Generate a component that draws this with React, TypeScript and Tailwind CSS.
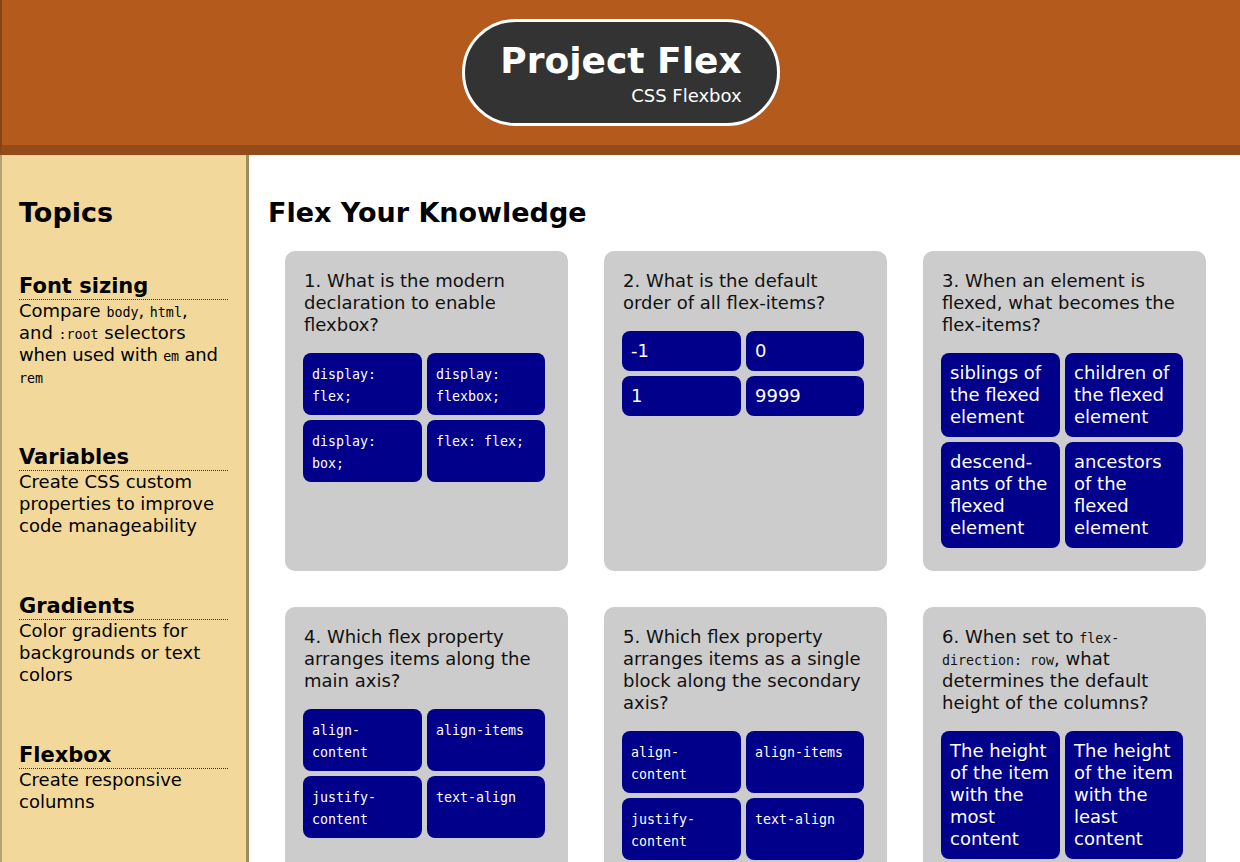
import type { ReactNode } from "react";

type Topic = { title: string; body: ReactNode };

const Code = ({ children }: { children: ReactNode }) => (
  <code className="font-['DejaVu_Sans_Mono',monospace] text-[13.3px] leading-[16px]">{children}</code>
);

const topics: Topic[] = [
  {
    title: "Font sizing",
    body: (
      <>
        Compare <Code>body</Code>, <Code>html</Code>,
        <br />
        and <Code>:root</Code> selectors
        <br />
        <span className="whitespace-nowrap tracking-[-0.2px]">
          when used with <Code>em</Code> and
        </span>
        <br />
        <Code>rem</Code>
      </>
    ),
  },
  { title: "Variables", body: "Create CSS custom properties to improve code manageability" },
  { title: "Gradients", body: "Color gradients for backgrounds or text colors" },
  { title: "Flexbox", body: "Create responsive columns" },
];

type Question = { q: ReactNode; answers: string[]; code?: boolean };

const questions: Question[] = [
  {
    q: "1. What is the modern declaration to enable flexbox?",
    answers: ["display: flex;", "display: flexbox;", "display: box;", "flex: flex;"],
    code: true,
  },
  { q: "2. What is the default order of all flex-items?", answers: ["-1", "0", "1", "9999"] },
  {
    q: "3. When an element is flexed, what becomes the flex-items?",
    answers: [
      "siblings of the flexed element",
      "children of the flexed element",
      "descend\u00ADants of the flexed element",
      "ancestors of the flexed element",
    ],
  },
  {
    q: "4. Which flex property arranges items along the main axis?",
    answers: ["align-content", "align-items", "justify-content", "text-align"],
    code: true,
  },
  {
    q: "5. Which flex property arranges items as a single block along the secondary axis?",
    answers: ["align-content", "align-items", "justify-content", "text-align"],
    code: true,
  },
  {
    q: (
      <>
        6. When set to <Code>flex-direction: row</Code>, what determines the default height of the columns?
      </>
    ),
    answers: ["The height of the item with the most content", "The height of the item with the least content"],
  },
];

function QuizCard({ question }: { question: Question }) {
  return (
    <div className="rounded-[10px] bg-[#cccccc] px-[19px] pt-[19px] pb-[19px]">
      <p className="text-[18px] leading-[22px] text-[#111] mb-[17px]">{question.q}</p>
      <div className="grid grid-cols-[119px_118px] gap-x-[5px] gap-y-[5px] -ml-px mb-[4px]">
        {question.answers.map((a) => (
          <div
            key={a}
            className="rounded-[8px] bg-[#00008b] text-white text-[18px] leading-[22px] py-[9px] pl-[9px] pr-[6px]"
          >
            {question.code ? <Code>{a}</Code> : a}
          </div>
        ))}
      </div>
    </div>
  );
}

export default function App() {
  return (
    <div className="min-h-screen bg-white font-['DejaVu_Sans',Verdana,sans-serif] text-black">
      <header className="h-[155px] bg-[#b35a1c] border-b-[10px] border-b-[#944a19] border-l-2 border-l-black/25 flex items-center justify-center">
        <div className="rounded-full border-[3px] border-white bg-[#333333] px-[35px] pt-[18px] pb-[17px] flex flex-col items-end text-white">
          <h1 className="text-[36px] font-bold leading-[42px]">Project Flex</h1>
          <p className="text-[18px] leading-[21px] mt-[3px]">CSS Flexbox</p>
        </div>
      </header>

      <div className="flex">
        <aside className="w-[249px] shrink-0 bg-[#f2d99b] border-l-2 border-l-black/25 border-r-[3px] border-r-[#a08b5e] pl-[17px] pr-[18px] pt-[42px] pb-10">
          <h2 className="text-[27px] font-bold leading-[31px]">Topics</h2>
          <div className="mt-[46px]">
            {topics.map((t) => (
              <section key={t.title} className="mb-[57px]">
                <h3 className="text-[21px] font-bold leading-[25px] border-b border-dotted border-[#333]">{t.title}</h3>
                <p className="text-[18px] leading-[22px]">{t.body}</p>
              </section>
            ))}
          </div>
        </aside>

        <main className="flex-1 pl-[19px] pt-[42px] pb-10">
          <h2 className="text-[27px] font-bold leading-[31px]">Flex Your Knowledge</h2>
          <div className="mt-[23px] ml-[17px] grid grid-cols-[283px_283px_283px] gap-[36px]">
            {questions.map((q, i) => (
              <QuizCard key={i} question={q} />
            ))}
          </div>
        </main>
      </div>
    </div>
  );
}
